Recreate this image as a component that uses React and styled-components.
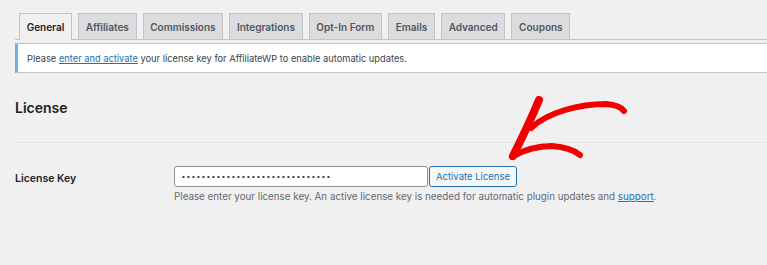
import React from "react";
import styled, { createGlobalStyle } from "styled-components";

const Global = createGlobalStyle`
  html, body { margin: 0; padding: 0; background: #f0f0f1; }
  body { font-family: Inter, "Noto Sans", "Liberation Sans", sans-serif; color: #3c434a; }
  * { box-sizing: border-box; }
`;

const Page = styled.div`
  position: relative;
  width: 767px;
  height: 265px;
  overflow: hidden;
  padding: 14px 0 0 15px;
`;

const TabBar = styled.nav`
  display: flex;
  gap: 6px;
  padding-left: 4px;
  border-bottom: 1px solid #c3c4c7;
  height: 26px;
  align-items: flex-end;
`;

const Tab = styled.a`
  display: flex;
  align-items: center;
  padding: 0 6.7px;
  font-size: 10px;
  font-weight: 600;
  border: 1px solid #c3c4c7;
  border-bottom: none;
  background: ${(p) => (p.$active ? "#f0f0f1" : "#dcdcde")};
  color: ${(p) => (p.$active ? "#1d2327" : "#50575e")};
  margin-bottom: ${(p) => (p.$active ? "-1px" : "0")};
  height: ${(p) => (p.$active ? "27px" : "26px")};
  white-space: nowrap;
`;

const Notice = styled.div`
  margin-top: 3px;
  height: 30px;
  display: flex;
  align-items: center;
  background: #fff;
  border: 1px solid #c3c4c7;
  border-left: 3px solid #72aee6;
  border-right: none;
  padding-left: 9px;
  font-size: 9.3px;
  color: #3c434a;
  white-space: pre;
`;

const Link = styled.a`
  color: #2271b1;
  text-decoration: underline;
`;

const Heading = styled.h2`
  margin: 0;
  height: 70px;
  display: flex;
  align-items: center;
  font-size: 14px;
  font-weight: 600;
  color: #1d2327;
  border-bottom: 1px solid #e2e2e4;
`;

const Row = styled.div`
  display: grid;
  grid-template-columns: 159px 1fr;
  padding-top: 23px;
`;

const Label = styled.div`
  font-size: 10.5px;
  font-weight: 600;
  color: #1d2327;
  height: 21px;
  display: flex;
  align-items: center;
  padding-top: 3px;
`;

const Field = styled.div`
  display: flex;
  flex-direction: column;
  gap: 4px;
`;

const Controls = styled.div`
  display: flex;
  gap: 1px;
`;

const KeyInput = styled.input`
  width: 254px;
  height: 21px;
  border: 1px solid #8c8f94;
  border-radius: 3px;
  background: #fff;
  padding: 0 7px;
  font-size: 8px;
  letter-spacing: 2.2px;
  color: #2c3338;
  outline: none;
  font-family: "Liberation Sans", sans-serif;
`;

const Button = styled.button`
  height: 21px;
  width: 88px;
  padding: 0;
  border: 1px solid #2271b1;
  border-radius: 3px;
  background: #f6f7f7;
  color: #2271b1;
  font-size: 9.5px;
  font-family: inherit;
  white-space: nowrap;
`;

const Description = styled.p`
  margin: 0;
  font-size: 9.8px;
  color: #646970;
  white-space: nowrap;
`;

const Arrow = styled.svg`
  position: absolute;
  left: 0;
  top: 0;
  pointer-events: none;
`;

const tabs = ["General", "Affiliates", "Commissions", "Integrations", "Opt-In Form", "Emails", "Advanced", "Coupons"];

export default function App() {
  return (
    <>
      <Global />
      <Page>
        <TabBar>
          {tabs.map((t, i) => (
            <Tab key={t} $active={i === 0}>{t}</Tab>
          ))}
        </TabBar>
        <Notice>
          Please <Link>enter and activate</Link> your license key for AffiliateWP to enable automatic updates.
        </Notice>
        <Heading>License</Heading>
        <Row>
          <Label>License Key</Label>
          <Field>
            <Controls>
              <KeyInput type="password" readOnly value="••••••••••••••••••••••••••••••" />
              <Button>Activate License</Button>
            </Controls>
            <Description>
              Please enter your license key. An active license key is needed for automatic plugin updates and <Link>support</Link>.
            </Description>
          </Field>
        </Row>
        <Arrow width="767" height="265" viewBox="0 0 767 265">
          <g fill="none" stroke="#f20000" strokeLinecap="round" strokeLinejoin="round">
            <path d="M539,100 C534,112 522,138 513,156" strokeWidth="8" />
            <path d="M531,128 C548,112 580,104 606,104 Q620,105 624,111" strokeWidth="6" />
            <path d="M512,157 C525,149 540,146 552,146 C565,147 574,150 580,155" strokeWidth="6" />
          </g>
        </Arrow>
      </Page>
    </>
  );
}
